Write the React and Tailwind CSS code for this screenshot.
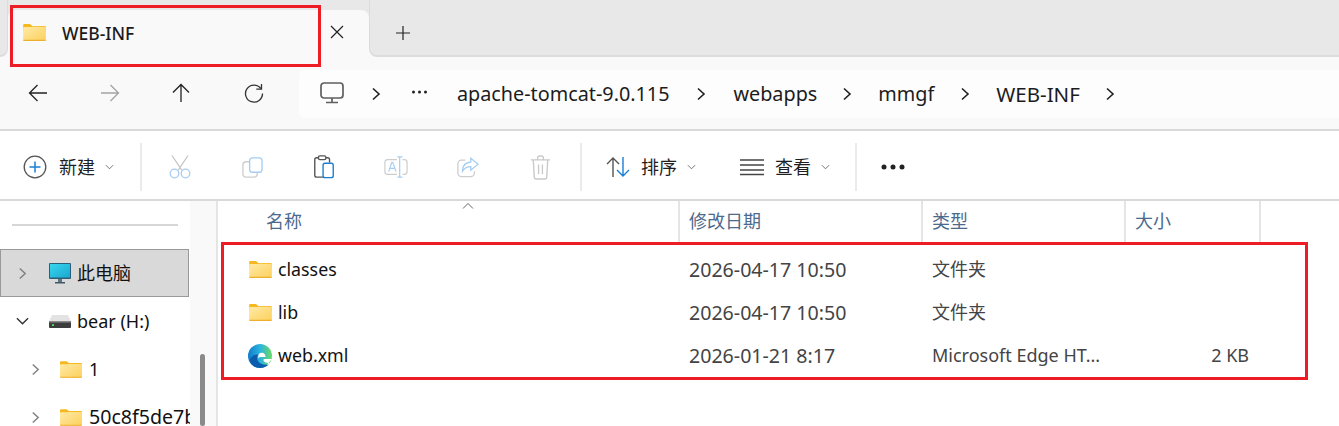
import React from "react";

function Folder({ className = "" }) {
  return (
    <svg viewBox="0 0 24 18" className={className}>
      <defs>
        <linearGradient id="fg" x1="0" y1="0" x2="1" y2="1">
          <stop offset="0" stopColor="#ffeaa6" />
          <stop offset="1" stopColor="#fcd05c" />
        </linearGradient>
      </defs>
      <path d="M0 1.200C0 .5.5 0 1.200 0h5.600c.5 0 .8.2 1.100.5L9.600 2H23c.6 0 1 .4 1 1v5H0z" fill="#f5b81f" />
      <path d="M0 4.200c0-.6.4-1 1-1h7.800L10 2.900h13c.6 0 1 .4 1 1V17c0 .6-.4 1-1 1H1c-.6 0-1-.4-1-1z" fill="url(#fg)" />
      <path d="M0 16.800h24V17c0 .6-.4 1-1 1H1c-.6 0-1-.4-1-1z" fill="#eeb02c" />
    </svg>
  );
}

function Edge({ className = "" }) {
  return (
    <svg viewBox="0 0 24 24" className={className}>
      <defs>
        <linearGradient id="e1" x1="0" y1="0.4" x2="1" y2="0.4">
          <stop offset="0" stopColor="#0f7ccc" />
          <stop offset="0.5" stopColor="#2bb3de" />
          <stop offset="1" stopColor="#6bdc63" />
        </linearGradient>
      </defs>
      <circle cx="12" cy="12" r="12" fill="url(#e1)" />
      <path d="M24 15H16.500c-1.500 0-1.500 2 .5 3.200 2 1 4.800 1 7 .3V24H16z" fill="#fff" />
      <path d="M10.500 10.500C11.500 9 13 8.500 14.500 8.800c2 .4 3 2 3 4.200h-5c-1.500 0-2.500 1-2.500 2.500z" fill="#fff" />
      <path d="M20.800 20.200C18.500 22.800 15.500 24 12 24 7 24 3 21 1.500 16.500 3 12.500 6 10 10.500 10.500 8.500 12.500 8.500 15 10 17c2.500 3.500 7 4.500 10.800 3.200z" fill="#0c5cae" />
    </svg>
  );
}

function Monitor() {
  return (
    <svg viewBox="0 0 22 21" className="w-[22px] h-[21px]">
      <defs>
        <linearGradient id="mo" x1="0" y1="0" x2="1" y2="1">
          <stop offset="0" stopColor="#38d6ef" />
          <stop offset="1" stopColor="#1ba7cf" />
        </linearGradient>
      </defs>
      <rect x="0" y="0" width="22" height="16" rx="1" fill="#2b5f78" />
      <rect x="1" y="1" width="20" height="13.500" fill="url(#mo)" />
      <rect x="9" y="16" width="4" height="3" fill="#5f7480" />
      <rect x="6" y="19" width="10" height="1.500" fill="#3f5866" />
    </svg>
  );
}

function Drive() {
  return (
    <svg viewBox="0 0 22 13" className="w-[22px] h-[13px]">
      <path d="M3 0h16l3 6.500H0z" fill="#e3e3e3" />
      <rect x="0" y="6" width="22" height="7" rx="1" fill="#3d3d3d" />
      <rect x="0" y="6" width="22" height="1.500" fill="#8a8a8a" />
      <rect x="3" y="9" width="2" height="2" fill="#4dd64d" />
    </svg>
  );
}

const Chev = ({ className = "", stroke = "#1f1f1f", w = 1.6 }) => (
  <svg viewBox="0 0 10 14" className={"shrink-0 " + className} fill="none" stroke={stroke} strokeWidth={w}>
    <path d="M2 1.500 8 7l-6 5.500" />
  </svg>
);

const Down = () => (
  <svg viewBox="0 0 10 6" className="w-[9px] h-[6px]" fill="none" stroke="#666" strokeWidth="1">
    <path d="M1 1l4 4 4-4" />
  </svg>
);

const NavBtn = ({ children }) => (
  <div className="w-[72px] flex items-center justify-center">{children}</div>
);

const Sep = ({ className = "" }) => <div className={"w-[2px] h-[48px] bg-[#ebebeb] " + className} />;

function Crumb({ children, className = "" }) {
  return <span className={"text-[#1c1c1c] leading-none " + className}>{children}</span>;
}

function Row({ icon, name, date, type, size }) {
  return (
    <div className="grid grid-cols-[461px_243px_203px_124px] h-[43px] items-center text-[18px] text-[#444]">
      <div className="flex items-center pl-[30px]">
        <div className="w-[24px] flex justify-center">{icon}</div>
        <span className="ml-[6px] text-[#111] text-[17.8px]">{name}</span>
      </div>
      <div className="pl-[10px] text-[19.6px]">{date}</div>
      <div className="pl-[10px] whitespace-nowrap">{type}</div>
      <div className="text-right">{size}</div>
    </div>
  );
}

const Head = ({ children, className = "" }) => (
  <div className={"h-full flex items-center border-r-2 border-[#e5e5e5] text-[18px] text-[#4c6a8c] " + className}>{children}</div>
);

export default function App() {
  return (
    <div
      className="relative w-[1339px] h-[426px] overflow-hidden bg-white flex flex-col"
      style={{ fontFamily: '"Noto Sans", "Noto Sans CJK SC", sans-serif' }}
    >
      {/* tab strip */}
      <div className="h-[57px] shrink-0 bg-[#f9f9f9] flex">
        <div className="w-[8px] h-full bg-[#e8e8e8] rounded-br-[8px] border-b-2 border-r border-[#dcdcdc]" />
        <div className="w-[361px] h-full bg-[#e8e8e8] pt-[10px]">
          <div className="relative h-full bg-[#f9f9f9] rounded-t-[8px] flex items-center pl-[15px]">
            <Folder className="w-[23px] h-[17px] -mt-[2px]" />
            <span className="ml-[16px] text-[17.5px] font-medium text-[#1b1b1b] leading-none">WEB-INF</span>
            <svg viewBox="0 0 14 14" className="absolute left-[322px] top-[15px] w-[14px] h-[14px]" fill="none" stroke="#222" strokeWidth="1.200">
              <path d="M1 1l12 12M13 1 1 13" />
            </svg>
          </div>
        </div>
        <div className="flex-1 h-full bg-[#e8e8e8] rounded-bl-[8px] border-b-2 border-l border-[#dcdcdc] flex items-start pt-[25px] pl-[25px]">
          <svg viewBox="0 0 16 16" className="w-[16px] h-[16px]" fill="none" stroke="#222" strokeWidth="1.200">
            <path d="M8 1v14M1 8h14" />
          </svg>
        </div>
      </div>

      {/* nav bar */}
      <div className="h-[74px] shrink-0 bg-[#f9f9f9] border-b-2 border-[#d9d9d9] flex items-center">
        <div className="w-[299px] flex pl-[2px]">
          <NavBtn>
            <svg viewBox="0 0 20 18" className="w-[20px] h-[18px]" fill="none" stroke="#222" strokeWidth="1.300"><path d="M19 9H1.500M9.500 1 1.500 9l8 8" /></svg>
          </NavBtn>
          <NavBtn>
            <svg viewBox="0 0 20 18" className="w-[20px] h-[18px]" fill="none" stroke="#a3a3a3" strokeWidth="1.300"><path d="M1 9h17.500M10.500 1l8 8-8 8" /></svg>
          </NavBtn>
          <NavBtn>
            <svg viewBox="0 0 18 20" className="w-[18px] h-[20px] -ml-[2px]" fill="none" stroke="#222" strokeWidth="1.300"><path d="M9 19V1.500M1 9.500l8-8 8 8" /></svg>
          </NavBtn>
          <NavBtn>
            <svg viewBox="0 0 20 20" className="w-[20px] h-[20px]" fill="none" stroke="#333" strokeWidth="1.300"><path d="M16.800 5.500A8.500 8.500 0 1 0 18.500 10.500" /><path d="M17.500 1v5.200h-5.200" /></svg>
          </NavBtn>
        </div>
        <div className="flex-1 h-[48px] mt-[2px] bg-[#fdfdfd] rounded-l-[6px] flex items-center pl-[21px]">
          <svg viewBox="0 0 24 22" className="w-[24px] h-[22px] -mt-[2px]" fill="none" stroke="#5f5f5f" strokeWidth="1.700">
            <rect x="1" y="1" width="22" height="15" rx="3" />
            <path d="M12 16v4M6 20.500h12" />
          </svg>
          <Chev className="ml-[27px] w-[10px] h-[14px]" />
          <svg viewBox="0 0 16 4" className="ml-[30px] w-[17px] h-[4px] -mt-[4px]" fill="#222">
            <circle cx="2" cy="2" r="1.500" /><circle cx="8" cy="2" r="1.500" /><circle cx="14" cy="2" r="1.500" />
          </svg>
          <Crumb className="ml-[29px] text-[19.800px]">apache-tomcat-9.0.115</Crumb>
          <Chev className="ml-[26px] w-[10px] h-[14px]" />
          <Crumb className="ml-[28px] text-[19.800px]">webapps</Crumb>
          <Chev className="ml-[25px] w-[10px] h-[14px]" />
          <Crumb className="ml-[26px] text-[19.800px]">mmgf</Crumb>
          <Chev className="ml-[26px] w-[10px] h-[14px]" />
          <Crumb className="ml-[26px] text-[20.500px]">WEB-INF</Crumb>
          <Chev className="ml-[25px] w-[10px] h-[14px]" />
        </div>
      </div>

      {/* command bar */}
      <div className="h-[70px] shrink-0 bg-white border-b-2 border-[#d9d9d9] flex items-center pt-[4px]">
        <svg viewBox="0 0 24 24" className="ml-[23px] w-[24px] h-[24px]" fill="none">
          <circle cx="12" cy="12" r="10.800" stroke="#555" strokeWidth="1.300" />
          <path d="M12 6.500v11M6.500 12h11" stroke="#1b7fd4" strokeWidth="1.500" />
        </svg>
        <span className="ml-[12px] text-[18px] text-[#1f1f1f] leading-none">新建</span>
        <div className="ml-[10px]"><Down /></div>
        <Sep className="ml-[26px]" />
        <div className="ml-[2px] flex">
          <NavBtn>
            <svg viewBox="0 0 22 24" className="w-[22px] h-[24px]" fill="none" stroke="#c4c4c4" strokeWidth="1.300">
              <path d="M3 .500l10 15M19 .500 9 15.500" />
              <circle cx="5.500" cy="18.500" r="4.300" stroke="#a6cdf2" />
              <circle cx="16.500" cy="18.500" r="4.300" stroke="#a6cdf2" />
            </svg>
          </NavBtn>
          <NavBtn>
            <svg viewBox="0 0 22 22" className="w-[21px] h-[21px]" fill="none" strokeWidth="1.400">
              <rect x="1" y="5" width="15" height="16" rx="3.500" stroke="#cdcdcd" />
              <rect x="8" y="1" width="13" height="15" rx="3" fill="#fff" stroke="#a6cdf2" />
            </svg>
          </NavBtn>
          <NavBtn>
            <svg viewBox="0 0 22 26" className="w-[22px] h-[24px]" fill="none" strokeWidth="1.500">
              <path d="M5 3H3a2 2 0 0 0-2 2v17a2 2 0 0 0 2 2h8M13 3h2a2 2 0 0 1 2 2v3" stroke="#555" />
              <rect x="5" y="1" width="8" height="4" rx="1.500" stroke="#555" />
              <rect x="10" y="9" width="11" height="15.500" rx="2" fill="#fff" stroke="#1b7fd4" />
            </svg>
          </NavBtn>
          <NavBtn>
            <svg viewBox="0 0 26 24" className="w-[24px] h-[24px]" fill="none" strokeWidth="1.300">
              <path d="M14 4H4a3 3 0 0 0-3 3v10a3 3 0 0 0 3 3h10M20 4h2a3 3 0 0 1 3 3v10a3 3 0 0 1-3 3h-2" stroke="#cdcdcd" />
              <path d="M5 17l3.500-10h1L13 17M6.500 13.500h5" stroke="#a6cdf2" />
              <path d="M14.500 1H20M17 1v22M14.500 23H20" stroke="#a6cdf2" />
            </svg>
          </NavBtn>
          <NavBtn>
            <svg viewBox="0 0 24 22" className="w-[22px] h-[21px]" fill="none" strokeWidth="1.400">
              <path d="M9 3H5a4 4 0 0 0-4 4v10a4 4 0 0 0 4 4h10a4 4 0 0 0 4-4v-2" stroke="#cdcdcd" />
              <path d="M15 1l8 6.500-8 6.500v-4c-4 0-7 1.500-9 5 0-5.500 3-9.500 9-10z" stroke="#a6cdf2" />
            </svg>
          </NavBtn>
          <NavBtn>
            <svg viewBox="0 0 22 26" className="w-[23px] h-[25px]" fill="none" stroke="#c9c9c9" strokeWidth="1.400">
              <path d="M1 5h20M8 5V3a2 2 0 0 1 2-2h2a2 2 0 0 1 2 2v2M3.500 5l1 18a2 2 0 0 0 2 2h9a2 2 0 0 0 2-2l1-18M9 10v10M13 10v10" />
            </svg>
          </NavBtn>
        </div>
        <Sep className="ml-[4px]" />
        <svg viewBox="0 0 24 22" className="ml-[24px] w-[24px] h-[22px]" fill="none" strokeWidth="1.400">
          <path d="M7 21V2M1 8l6-6 6 6" stroke="#555" />
          <path d="M17 1v19M11 14l6 6 6-6" stroke="#1b7fd4" />
        </svg>
        <span className="ml-[11px] text-[18px] text-[#1f1f1f] leading-none">排序</span>
        <div className="ml-[10px]"><Down /></div>
        <svg viewBox="0 0 24 18" className="ml-[44px] w-[24px] h-[18px]" fill="none" stroke="#444" strokeWidth="1.300">
          <path d="M0 2h24M0 7h24M0 12h24M0 16.500h24" />
        </svg>
        <span className="ml-[11px] text-[18px] text-[#1f1f1f] leading-none">查看</span>
        <div className="ml-[10px]"><Down /></div>
        <Sep className="ml-[25px]" />
        <svg viewBox="0 0 24 6" className="ml-[24px] w-[24px] h-[6px]" fill="#222">
          <circle cx="3" cy="3" r="2.500" /><circle cx="12" cy="3" r="2.500" /><circle cx="21" cy="3" r="2.500" />
        </svg>
      </div>

      {/* body */}
      <div className="flex-1 flex min-h-0">
        <aside className="relative w-[218px] shrink-0 border-r-2 border-[#e5e5e5] flex">
          <div className="w-[190px] shrink-0 overflow-hidden text-[18px] text-[#111] whitespace-nowrap">
            <div className="h-[48px] flex items-start pt-[23px] pl-[12px]">
              <div className="w-[166px] h-[2px] bg-[#d6d6d6]" />
            </div>
            <div className="h-[48px] bg-[#d9d9d9] border border-[#999] w-[189px] flex items-center pl-[17px]">
              <Chev className="w-[9px] h-[13px]" stroke="#808080" />
              <div className="ml-[22px]"><Monitor /></div>
              <span className="ml-[6px]">此电脑</span>
            </div>
            <div className="h-[48px] flex items-center pl-[16px]">
              <svg viewBox="0 0 14 9" className="w-[13px] h-[9px]" fill="none" stroke="#333" strokeWidth="1.500"><path d="M1 1l6 6 6-6" /></svg>
              <div className="ml-[20px]"><Drive /></div>
              <span className="ml-[6px]">bear (H:)</span>
            </div>
            <div className="h-[48px] flex items-center pl-[31px]">
              <Chev className="w-[9px] h-[13px]" stroke="#808080" />
              <Folder className="ml-[20px] w-[22px] h-[17px] shrink-0" />
              <span className="ml-[7px]">1</span>
            </div>
            <div className="h-[48px] flex items-center pl-[31px]">
              <Chev className="w-[9px] h-[13px]" stroke="#808080" />
              <Folder className="ml-[20px] w-[22px] h-[17px] shrink-0" />
              <span className="ml-[7px] text-[19.600px]">50c8f5de7b</span>
            </div>
          </div>
          <div className="flex-1 bg-[#f9f9f9] relative">
            <div className="absolute left-[10px] top-[153px] bottom-0 w-[5px] rounded-full bg-[#8a8a8a]" />
          </div>
        </aside>
        <main className="flex-1 min-w-0 bg-white">
          <div className="relative h-[41px] grid grid-cols-[462px_243px_203px_135px] w-[1043px]">
            <Head className="pl-[48px]">名称</Head>
            <Head className="pl-[9px]">修改日期</Head>
            <Head className="pl-[9px]">类型</Head>
            <Head className="pl-[9px]">大小</Head>
            <svg viewBox="0 0 12 6" className="absolute left-[244px] top-[2px] w-[12px] h-[6px]" fill="none" stroke="#666" strokeWidth="1"><path d="M1 5.500l5-5 5 5" /></svg>
          </div>
          <div className="pt-[6px]">
            <Row icon={<Folder className="w-[23px] h-[17px]" />} name="classes" date="2026-04-17 10:50" type="文件夹" />
            <Row icon={<Folder className="w-[23px] h-[17px]" />} name="lib" date="2026-04-17 10:50" type="文件夹" />
            <Row icon={<Edge className="w-[24px] h-[24px]" />} name="web.xml" date="2026-01-21 8:17" type="Microsoft Edge HT..." size="2 KB" />
          </div>
        </main>
      </div>

      {/* red annotation boxes */}
      <div className="absolute left-[10px] top-[5px] w-[311px] h-[62px] border-[3px] border-[#ee1c25] pointer-events-none" />
      <div className="absolute left-[221px] top-[242px] w-[1087px] h-[138px] border-[3px] border-[#ee1c25] pointer-events-none" />
    </div>
  );
}
